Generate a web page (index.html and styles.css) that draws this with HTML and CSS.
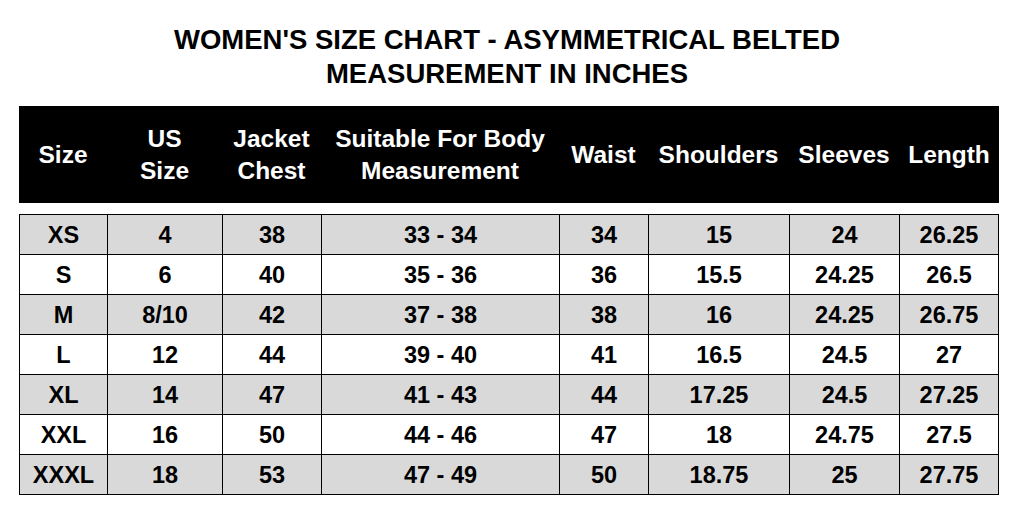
FILE: index.html
```html
<!DOCTYPE html>
<html>
<head>
<meta charset="utf-8">
<link rel="stylesheet" href="styles.css">
</head>
<body>
<div class="title">
  <div>WOMEN'S SIZE CHART - ASYMMETRICAL BELTED</div>
  <div>MEASUREMENT IN INCHES</div>
</div>
<div class="head">
  <div class="hc">Size</div>
  <div class="hc">US<br>Size</div>
  <div class="hc">Jacket<br>Chest</div>
  <div class="hc">Suitable For Body<br>Measurement</div>
  <div class="hc">Waist</div>
  <div class="hc">Shoulders</div>
  <div class="hc">Sleeves</div>
  <div class="hc">Length</div>
</div>
<div class="grid">
  <div class="c g">XS</div><div class="c g">4</div><div class="c g">38</div><div class="c g">33 - 34</div><div class="c g">34</div><div class="c g">15</div><div class="c g">24</div><div class="c g">26.25</div>
  <div class="c">S</div><div class="c">6</div><div class="c">40</div><div class="c">35 - 36</div><div class="c">36</div><div class="c">15.5</div><div class="c">24.25</div><div class="c">26.5</div>
  <div class="c g">M</div><div class="c g">8/10</div><div class="c g">42</div><div class="c g">37 - 38</div><div class="c g">38</div><div class="c g">16</div><div class="c g">24.25</div><div class="c g">26.75</div>
  <div class="c">L</div><div class="c">12</div><div class="c">44</div><div class="c">39 - 40</div><div class="c">41</div><div class="c">16.5</div><div class="c">24.5</div><div class="c">27</div>
  <div class="c g">XL</div><div class="c g">14</div><div class="c g">47</div><div class="c g">41 - 43</div><div class="c g">44</div><div class="c g">17.25</div><div class="c g">24.5</div><div class="c g">27.25</div>
  <div class="c">XXL</div><div class="c">16</div><div class="c">50</div><div class="c">44 - 46</div><div class="c">47</div><div class="c">18</div><div class="c">24.75</div><div class="c">27.5</div>
  <div class="c g">XXXL</div><div class="c g">18</div><div class="c g">53</div><div class="c g">47 - 49</div><div class="c g">50</div><div class="c g">18.75</div><div class="c g">25</div><div class="c g">27.75</div>
</div>
</body>
</html>
```

FILE: styles.css
```css
html, body {
  margin: 0;
  padding: 0;
  background: #fff;
}
body {
  font-family: "Liberation Sans", Arial, sans-serif;
  font-weight: bold;
  width: 1014px;
  height: 514px;
  overflow: hidden;
}
.title {
  padding-top: 23px;
  text-align: center;
  font-size: 27.5px;
  line-height: 34px;
  color: #000;
}
.head {
  margin: 15px 0 0 19px;
  width: 980px;
  height: 97px;
  background: #000;
  display: grid;
  grid-template-columns: 88px 115px 99px 238px 89px 141px 110px 100px;
}
.hc {
  color: #fff;
  font-size: 24.5px;
  line-height: 32px;
  display: flex;
  align-items: center;
  justify-content: center;
  text-align: center;
  white-space: nowrap;
  padding-top: 1px;
}
.grid {
  margin: 11px 0 0 19px;
  width: 980px;
  box-sizing: border-box;
  padding: 1px;
  background: #000;
  display: grid;
  grid-template-columns: 87px 114px 98px 237px 88px 140px 109px 98px;
  grid-auto-rows: 39px;
  gap: 1px;
}
.c {
  background: #fff;
  color: #000;
  font-size: 23.5px;
  padding-top: 1px;
  display: flex;
  align-items: center;
  justify-content: center;
}
.c.g {
  background: #d9d9d9;
}
```
